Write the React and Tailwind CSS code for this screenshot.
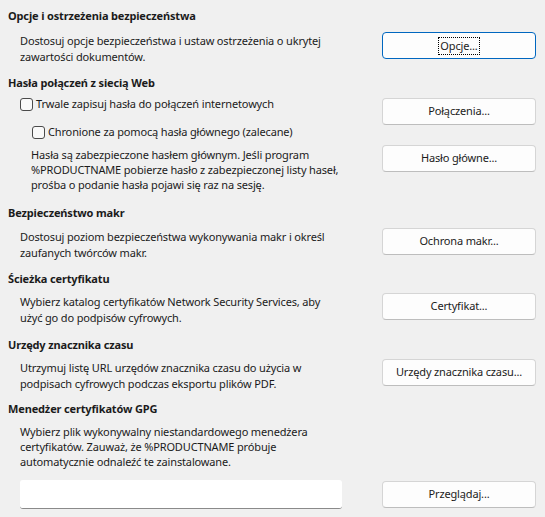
const Button = ({ children, focused }) => (
    <button
        className={
            focused
                ? 'w-[154px] h-[27px] shrink-0 rounded-[4px] border border-[#0067c0] bg-[#fdfdfd] flex items-center justify-center'
                : 'w-[154px] h-[27px] shrink-0 rounded-[4px] border border-[#d5d5d5] border-b-[#bdbdbd] bg-[#fdfdfd] flex items-center justify-center'
        }
    >
        {focused ? <span className="outline outline-1 outline-dotted outline-black px-[1px] leading-[16px]">{children}</span> : children}
    </button>
);

const Checkbox = ({ label }) => (
    <div className="flex items-center h-5 gap-[3px]">
        <span className="w-[13px] h-[13px] rounded-[3px] border border-[#4a4a4a] bg-[#f9f9f9]"></span>
        <span>{label}</span>
    </div>
);

const Heading = ({ children }) => (
    <h2 className="font-bold leading-4 h-4">{children}</h2>
);

const App = () => {
    return (
        <div className="w-[545px] h-[517px] overflow-hidden bg-[#f0f0f0] text-[#1b1b1b] text-[11px] tracking-[-0.15px] font-['Noto_Sans',sans-serif] pt-2 pl-2 pr-[9px]">
            {/* Opcje i ostrzeżenia */}
            <Heading>Opcje i ostrzeżenia bezpieczeństwa</Heading>
            <div className="flex justify-between items-start mt-2">
                <p className="pl-3 mt-[1px] leading-4">
                    Dostosuj opcje bezpieczeństwa i ustaw ostrzeżenia o ukrytej<br />
                    zawartości dokumentów.
                </p>
                <Button focused>Opcje...</Button>
            </div>

            {/* Hasła */}
            <div className="mt-[10px]">
                <Heading>Hasła połączeń z siecią Web</Heading>
            </div>
            <div className="flex justify-between items-start">
                <div className="pl-3">
                    <div className="mt-[3px]">
                        <Checkbox label="Trwale zapisuj hasła do połączeń internetowych" />
                    </div>
                    <div className="mt-2 pl-3">
                        <Checkbox label="Chronione za pomocą hasła głównego (zalecane)" />
                    </div>
                    <p className="mt-[5px] pl-[11px] leading-[15px]">
                        Hasła są zabezpieczone hasłem głównym. Jeśli program<br />
                        %PRODUCTNAME pobierze hasło z zabezpieczonej listy haseł,<br />
                        prośba o podanie hasła pojawi się raz na sesję.
                    </p>
                </div>
                <div className="flex flex-col">
                    <div className="mt-[7px]">
                        <Button>Połączenia...</Button>
                    </div>
                    <div className="mt-5">
                        <Button>Hasło główne...</Button>
                    </div>
                </div>
            </div>

            {/* Makra */}
            <div className="mt-[13px]">
                <Heading>Bezpieczeństwo makr</Heading>
            </div>
            <div className="flex justify-between items-start mt-[7px]">
                <p className="pl-3 mt-[1px] leading-4">
                    Dostosuj poziom bezpieczeństwa wykonywania makr i określ<br />
                    zaufanych twórców makr.
                </p>
                <Button>Ochrona makr...</Button>
            </div>

            {/* Certyfikat */}
            <div className="mt-[10px]">
                <Heading>Ścieżka certyfikatu</Heading>
            </div>
            <div className="flex justify-between items-start mt-[6px]">
                <p className="pl-3 mt-[1px] leading-4">
                    Wybierz katalog certyfikatów Network Security Services, aby<br />
                    użyć go do podpisów cyfrowych.
                </p>
                <Button>Certyfikat...</Button>
            </div>

            {/* Urzędy znacznika czasu */}
            <div className="mt-[11px]">
                <Heading>Urzędy znacznika czasu</Heading>
            </div>
            <div className="flex justify-between items-start mt-[6px]">
                <p className="pl-3 mt-[1px] leading-4">
                    Utrzymuj listę URL urzędów znacznika czasu do użycia w<br />
                    podpisach cyfrowych podczas eksportu plików PDF.
                </p>
                <Button>Urzędy znacznika czasu...</Button>
            </div>

            {/* GPG */}
            <div className="mt-[9px]">
                <Heading>Menedżer certyfikatów GPG</Heading>
            </div>
            <p className="pl-3 mt-[7px] leading-[15px]">
                Wybierz plik wykonywalny niestandardowego menedżera<br />
                certyfikatów. Zauważ, że %PRODUCTNAME próbuje<br />
                automatycznie odnaleźć te zainstalowane.
            </p>
            <div className="flex justify-between items-center mt-[11px] pl-3">
                <input
                    type="text"
                    className="w-[322px] h-[29px] bg-white rounded-[3px] border-b border-[#8a8a8a] outline-none px-2 text-[11px]"
                />
                <Button>Przeglądaj...</Button>
            </div>
        </div>
    );
};

export default App;
